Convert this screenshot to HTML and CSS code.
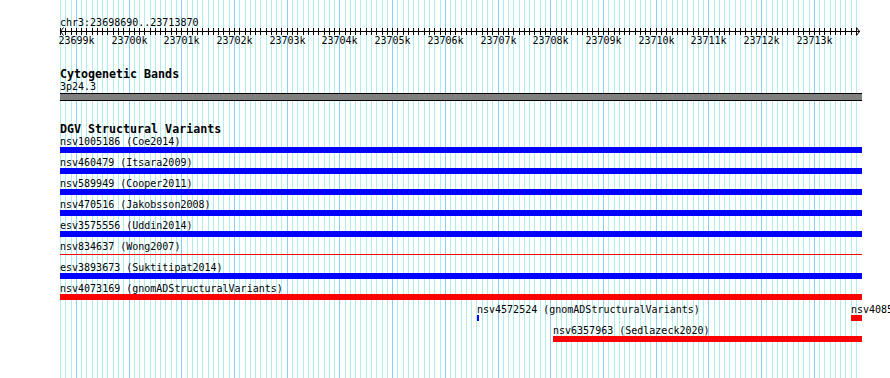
FILE: index.html
```html
<!DOCTYPE html>
<html>

<head>
  <meta charset="utf-8" />
  <title>DGV Browser - chr3:23698690..23713870</title>
  <link rel="stylesheet" href="styles.css">
</head>

<body>
  <div class="panel">
    <svg class="grid" id="grid" width="890" height="378"></svg>

    <svg class="scale" id="scale" width="890" height="50">
      <text class="chrom" x="60" y="26">chr3:23698690..23713870</text>
    </svg>

    <div class="track bands">
      <div class="title">Cytogenetic Bands</div>
      <div class="band-label">3p24.3</div>
      <div class="band"></div>
    </div>

    <div class="track dgv">
      <div class="title">DGV Structural Variants</div>

      <div class="row">
        <div class="feat" style="left:0;width:802px">
          <div class="label">nsv1005186 (Coe2014)</div>
          <div class="bar gain"></div>
        </div>
      </div>

      <div class="row">
        <div class="feat" style="left:0;width:802px">
          <div class="label">nsv460479 (Itsara2009)</div>
          <div class="bar gain"></div>
        </div>
      </div>

      <div class="row">
        <div class="feat" style="left:0;width:802px">
          <div class="label">nsv589949 (Cooper2011)</div>
          <div class="bar gain"></div>
        </div>
      </div>

      <div class="row">
        <div class="feat" style="left:0;width:802px">
          <div class="label">nsv470516 (Jakobsson2008)</div>
          <div class="bar gain"></div>
        </div>
      </div>

      <div class="row">
        <div class="feat" style="left:0;width:802px">
          <div class="label">esv3575556 (Uddin2014)</div>
          <div class="bar gain"></div>
        </div>
      </div>

      <div class="row">
        <div class="feat" style="left:0;width:802px">
          <div class="label">nsv834637 (Wong2007)</div>
          <div class="bar loss thin"></div>
        </div>
      </div>

      <div class="row">
        <div class="feat" style="left:0;width:802px">
          <div class="label">esv3893673 (Suktitipat2014)</div>
          <div class="bar gain"></div>
        </div>
      </div>

      <div class="row">
        <div class="feat" style="left:0;width:802px">
          <div class="label">nsv4073169 (gnomADStructuralVariants)</div>
          <div class="bar loss"></div>
        </div>
      </div>

      <div class="row">
        <div class="feat" style="left:417px;width:2px">
          <div class="label">nsv4572524 (gnomADStructuralVariants)</div>
          <div class="bar gain"></div>
        </div>
        <div class="feat" style="left:791px;width:11px">
          <div class="label">nsv4085</div>
          <div class="bar loss"></div>
        </div>
      </div>

      <div class="row">
        <div class="feat" style="left:493px;width:309px">
          <div class="label">nsv6357963 (Sedlazeck2020)</div>
          <div class="bar loss"></div>
        </div>
      </div>
    </div>
  </div>

  <script type="text/javascript">
    var start = 23698690, end = 23713870;
    var scale = 0.052714;
    var ns = 'http://www.w3.org/2000/svg';

    function px(bp) {
      return Math.floor(60 + (bp - start) * scale);
    }

    function el(parent, name, attrs) {
      var e = document.createElementNS(ns, name);
      for (var k in attrs) e.setAttribute(k, attrs[k]);
      parent.appendChild(e);
      return e;
    }

    // grid lines behind the tracks
    var grid = document.getElementById('grid');
    for (var bp = 23698700; bp <= end; bp += 100) {
      el(grid, 'rect', { x: px(bp), y: 0, width: 1, height: 378, 'class': bp % 1000 == 0 ? 'major' : 'minor' });
    }

    // ruler
    var sc = document.getElementById('scale');
    el(sc, 'rect', { x: 60, y: 31, width: 800, height: 1, 'class': 'axis' });
    el(sc, 'path', { d: 'M63.5 27.5L60.5 31.5L63.5 35.5', 'class': 'arrow' });
    el(sc, 'path', { d: 'M856.5 27.5L859.5 31.5L856.5 35.5', 'class': 'arrow' });
    for (var bp = 23698700; bp <= end; bp += 100) {
      el(sc, 'rect', { x: px(bp), y: 28, width: 1, height: 7, 'class': 'axis' });
      if (bp % 1000 == 0) {
        var t = el(sc, 'text', { x: px(bp) + 0.5, y: 44, 'class': 'tick' });
        t.textContent = (bp / 1000) + 'k';
      }
    }
  </script>
</body>

</html>
```

FILE: styles.css
```css
body {
  margin: 0;
  background: #fff;
  color: #000;
  font: 10px/13px "DejaVu Sans Mono", monospace;
  overflow: hidden;
}

.panel {
  position: relative;
  z-index: 0;
  width: 890px;
  height: 378px;
}

.grid {
  position: absolute;
  left: 0;
  top: 0;
  z-index: -1;
}

.grid .minor {
  fill: #afeeee;
}

.grid .major {
  fill: #87cefa;
}

.scale {
  display: block;
}

.scale text {
  font: 10px "DejaVu Sans Mono", monospace;
  fill: #000;
}

.scale .tick {
  text-anchor: middle;
}

.scale .axis {
  fill: #000;
}

.scale .arrow {
  fill: none;
  stroke: #000;
  stroke-width: 1;
}

.track {
  padding-left: 60px;
  width: 802px;
}

.track .title {
  font: bold 11.65px/12px "DejaVu Sans Mono", monospace;
  white-space: nowrap;
}

.bands {
  margin-top: 18px;
}

.band-label {
  height: 13px;
}

.band {
  height: 6px;
  background: #808080;
  border-top: 1px solid #000;
  border-bottom: 1px solid #000;
}

.dgv {
  margin-top: 22px;
}

.row {
  position: relative;
  height: 21px;
}

.feat {
  position: absolute;
  top: 0;
}

.feat .label {
  height: 12px;
  white-space: nowrap;
}

.bar {
  height: 6px;
}

.bar.gain {
  background: #0000ff;
}

.bar.loss {
  background: #ff0000;
}

.bar.thin {
  height: 1px;
  margin-top: 2px;
}
```
